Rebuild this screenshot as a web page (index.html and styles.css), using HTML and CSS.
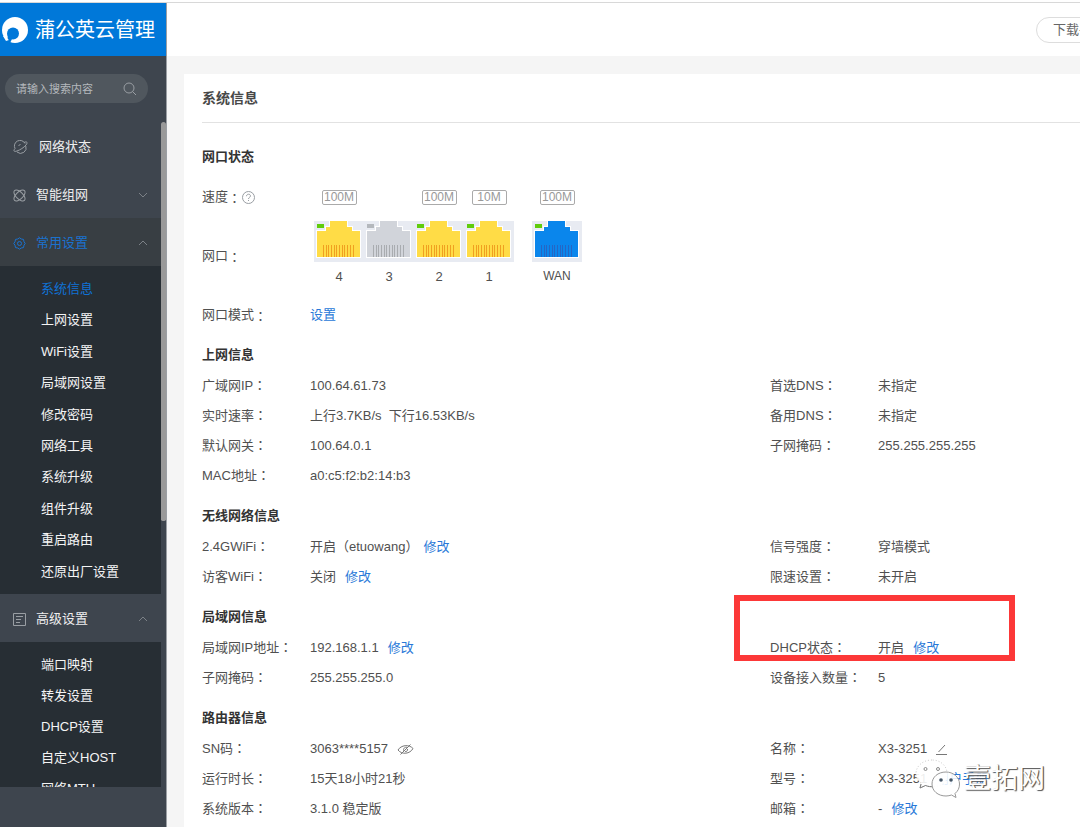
FILE: index.html
```html
<!DOCTYPE html>
<html>
<head>
<meta charset="utf-8">
<title>蒲公英云管理</title>
<link rel="stylesheet" href="styles.css">
</head>
<body>
<svg class="defs" aria-hidden="true">
  <symbol id="port" viewBox="0 0 50 41">
    <rect width="50" height="41" fill="#e8ebf2"/>
    <path d="M2 37V9H11V5H15V0H34V5H39V9H47V37Z" fill="#fff"/>
    <path d="M3 36V10H12V6H16V0H33V6H38V10H46V36Z" fill="currentColor"/>
    <rect class="led" x="3" y="3" width="7" height="4"/>
    <path class="pins" d="M9.500 24V36M12.500 24V36M14.500 24V36M17.500 24V36M20.500 24V36M22.500 24V36M25.500 24V36M28.500 24V36M30.500 24V36M33.500 24V36M36.500 24V36M39.500 24V36"/>
  </symbol>
  <symbol id="down" viewBox="0 0 10 6"><path d="M1 1L5 5L9 1"/></symbol>
  <symbol id="up" viewBox="0 0 10 6"><path d="M1 5L5 1L9 5"/></symbol>
</svg>
<div class="app">
  <aside class="sidebar">
    <div class="brand">
      <svg width="28" height="28" viewBox="0 0 28 28"><circle cx="14" cy="14" r="13" fill="#fff"/><circle cx="12" cy="17.500" r="6" fill="#0078d9"/><path d="M7 19L11 23L8.500 28L4 26L6 24Z" fill="#0078d9"/><path d="M6 19.500C6 22 7 23.500 8 24L5 25L2 20Z" fill="#fff"/></svg>
      <h1>蒲公英云管理</h1>
    </div>
    <div class="search">
      <input type="text" placeholder="请输入搜索内容" aria-label="搜索">
      <svg width="14" height="14" viewBox="0 0 14 14"><circle cx="6" cy="6" r="5"/><path d="M9.500 9.500L13 13"/></svg>
    </div>
    <nav class="menu">
      <a class="item top" href="#">
        <svg width="15" height="14" viewBox="0 0 15 14"><path d="M2 8.500A5.500 5.500 0 0 1 12 3.500M12.800 6A5.500 5.500 0 0 1 4 12"/><path d="M11 2.500C14 1 15 2.500 13 5C11 7.500 7 10 4 11C1 12 0 11 2 8.500"/><path d="M5.500 5.500L7.500 4.500"/></svg>
        <span>网络状态</span>
      </a>
      <a class="item" href="#">
        <svg width="13" height="13" viewBox="0 0 13 13"><ellipse cx="6.500" cy="6.500" rx="7" ry="3.500" transform="rotate(45 6.500 6.500)"/><ellipse cx="6.500" cy="6.500" rx="7" ry="3.500" transform="rotate(-45 6.500 6.500)"/></svg>
        <span>智能组网</span>
        <svg class="arrow" width="10" height="6"><use href="#down"/></svg>
      </a>
      <a class="item active" href="#">
        <svg width="13" height="13" viewBox="0 0 13 13"><path d="M6.500 .8L8.300 2L10.500 2.400L11 4.700L12.200 6.500L11 8.300L10.500 10.600L8.300 11L6.500 12.200L4.700 11L2.500 10.600L2 8.300L.8 6.500L2 4.700L2.500 2.400L4.700 2Z"/><circle cx="6.500" cy="6.500" r="2"/></svg>
        <span>常用设置</span>
        <svg class="arrow" width="10" height="6"><use href="#up"/></svg>
      </a>
      <div class="sub common">
        <a class="current" href="#">系统信息</a>
        <a href="#">上网设置</a>
        <a href="#">WiFi设置</a>
        <a href="#">局域网设置</a>
        <a href="#">修改密码</a>
        <a href="#">网络工具</a>
        <a href="#">系统升级</a>
        <a href="#">组件升级</a>
        <a href="#">重启路由</a>
        <a href="#">还原出厂设置</a>
      </div>
      <a class="item" href="#">
        <svg width="13" height="13" viewBox="0 0 13 13"><path d="M.5 .5H12.500V12.500H.5ZM3 3.500H10M3 6.500H8M3 9.500H7"/></svg>
        <span>高级设置</span>
        <svg class="arrow" width="10" height="6"><use href="#up"/></svg>
      </a>
      <div class="sub">
        <a href="#">端口映射</a>
        <a href="#">转发设置</a>
        <a href="#">DHCP设置</a>
        <a href="#">自定义HOST</a>
        <a href="#">网络MTU</a>
      </div>
      <div class="thumb"></div>
    </nav>
  </aside>
  <div class="page">
    <header class="bar"><button type="button">下载手机端</button></header>
    <main class="card">
      <h2>系统信息</h2>

      <section class="ports">
        <h3>网口状态</h3>
        <div class="row">
          <div class="label">速度<span class="fw">：</span><svg class="help" width="13" height="13" viewBox="0 0 13 13"><circle cx="6.500" cy="6.500" r="6"/><path d="M4.500 5.200C4.500 2.500 8.500 2.700 8.500 5C8.500 6.300 6.500 6.300 6.500 8M6.500 9V10"/></svg></div>
          <div class="cells">
            <div class="cell"><span class="speed">100M</span></div>
            <div class="cell"></div>
            <div class="cell"><span class="speed">100M</span></div>
            <div class="cell"><span class="speed">10M</span></div>
            <div class="cell wan"><span class="speed">100M</span></div>
          </div>
        </div>
        <div class="row sockets">
          <div class="label">网口<span class="fw">：</span></div>
          <div class="cells">
            <div class="cell lan"><svg width="50" height="41"><use href="#port"/></svg><span>4</span></div>
            <div class="cell off"><svg width="50" height="41"><use href="#port"/></svg><span>3</span></div>
            <div class="cell lan"><svg width="50" height="41"><use href="#port"/></svg><span>2</span></div>
            <div class="cell lan"><svg width="50" height="41"><use href="#port"/></svg><span>1</span></div>
            <div class="cell wan"><svg width="50" height="41"><use href="#port"/></svg><span class="name">WAN</span></div>
          </div>
        </div>
        <div class="row"><div class="label">网口模式<span class="fw">：</span></div><a href="#">设置</a></div>
      </section>

      <section>
        <h3>上网信息</h3>
        <div class="columns">
          <dl>
            <div class="row"><dt>广域网IP<span class="fw">：</span></dt><dd>100.64.61.73</dd></div>
            <div class="row"><dt>实时速率<span class="fw">：</span></dt><dd>上行3.7KB/s&nbsp; 下行16.53KB/s</dd></div>
            <div class="row"><dt>默认网关<span class="fw">：</span></dt><dd>100.64.0.1</dd></div>
            <div class="row"><dt>MAC地址<span class="fw">：</span></dt><dd>a0:c5:f2:b2:14:b3</dd></div>
          </dl>
          <dl>
            <div class="row"><dt>首选DNS<span class="fw">：</span></dt><dd>未指定</dd></div>
            <div class="row"><dt>备用DNS<span class="fw">：</span></dt><dd>未指定</dd></div>
            <div class="row"><dt>子网掩码<span class="fw">：</span></dt><dd>255.255.255.255</dd></div>
          </dl>
        </div>
      </section>

      <section>
        <h3>无线网络信息</h3>
        <div class="columns">
          <dl>
            <div class="row"><dt>2.4GWiFi<span class="fw">：</span></dt><dd>开启<span class="fw">（</span>etuowang<span class="fw">）</span><a href="#">修改</a></dd></div>
            <div class="row"><dt>访客WiFi<span class="fw">：</span></dt><dd>关闭<a href="#">修改</a></dd></div>
          </dl>
          <dl>
            <div class="row"><dt>信号强度<span class="fw">：</span></dt><dd>穿墙模式</dd></div>
            <div class="row"><dt>限速设置<span class="fw">：</span></dt><dd>未开启</dd></div>
          </dl>
        </div>
      </section>

      <section>
        <h3>局域网信息</h3>
        <div class="columns">
          <dl>
            <div class="row"><dt>局域网IP地址<span class="fw">：</span></dt><dd>192.168.1.1<a href="#">修改</a></dd></div>
            <div class="row"><dt>子网掩码<span class="fw">：</span></dt><dd>255.255.255.0</dd></div>
          </dl>
          <dl>
            <div class="row marked"><dt>DHCP状态<span class="fw">：</span></dt><dd>开启<a href="#">修改</a></dd></div>
            <div class="row"><dt>设备接入数量<span class="fw">：</span></dt><dd>5</dd></div>
          </dl>
        </div>
      </section>

      <section>
        <h3>路由器信息</h3>
        <div class="columns">
          <dl>
            <div class="row"><dt>SN码<span class="fw">：</span></dt><dd>3063****5157<svg class="glyph" width="17" height="11" viewBox="0 0 17 11"><path d="M1 6C4 1 12 0 16 4.500C13 10 5 11 1 6ZM3.500 10.500L13.500 .5M7 7C5.500 5 8 2.500 10 3.500M10.500 5C11 7 9 8 8 7.500"/></svg></dd></div>
            <div class="row"><dt>运行时长<span class="fw">：</span></dt><dd>15天18小时21秒</dd></div>
            <div class="row"><dt>系统版本<span class="fw">：</span></dt><dd>3.1.0 稳定版</dd></div>
          </dl>
          <dl>
            <div class="row"><dt>名称<span class="fw">：</span></dt><dd>X3-3251<svg class="glyph" width="11" height="11" viewBox="0 0 11 11"><path d="M2.500 8L9 1M0 10.500H11"/></svg></dd></div>
            <div class="row"><dt>型号<span class="fw">：</span></dt><dd>X3-3251<a href="#">用户手册</a></dd></div>
            <div class="row"><dt>邮箱<span class="fw">：</span></dt><dd>-<a href="#">修改</a></dd></div>
          </dl>
        </div>
      </section>
    </main>
    <div class="watermark">
      <svg width="46" height="40" viewBox="0 0 46 40">
        <path d="M17 1C8 1 1 7 1 14.500C1 19 3 22 6.500 24.500L5 29L10.500 26.500C13 27.500 16 28 19 27.500C30 27 33 20 32 13C31 6 25 1 17 1Z" fill="#fff" fill-opacity=".9" stroke="#ccc" stroke-dasharray="1 2"/>
        <path d="M6 25L5 29L10.500 26.500C13 27.500 16 28 18 27.500" fill="none" stroke="#777"/>
        <path d="M31 13C23 13 17 18 17 25C17 32 23 37 31 37C33 37 35 36.500 36.500 36L41 38.500L40 34.500C43 32 44.500 29 44.500 25C44.500 18 38 13 31 13Z" fill="#fff" fill-opacity=".88" stroke="#999"/>
        <g fill="#fff" stroke="#888"><circle cx="10.500" cy="10" r="1.500"/><circle cx="23" cy="10" r="1.500"/></g>
        <g fill="#456"><circle cx="26" cy="21" r="1.800"/><circle cx="36" cy="21" r="1.800"/></g>
      </svg>
      <span>壹拓网</span>
    </div>
  </div>
</div>
</body>
</html>
```
FILE: styles.css
```css
*, *::after { box-sizing: border-box; }

body {
  margin: 0;
  color: #505050;
  background: #fff;
  font: 13px/30px "Liberation Sans", "Noto Sans CJK SC", sans-serif;
}

h1, h2, h3, dl, dd { margin: 0; }
a { color: #2878d8; text-decoration: none; }
.defs { position: absolute; width: 0; height: 0; }
.fw { font-family: "Noto Sans CJK TC", sans-serif; line-height: 1; }

.app {
  display: flex;
  height: calc(100vh - 2px);
  overflow: hidden;
  border-top: 1px solid #d8d8d8;
  margin-top: 2px;
}

/* Sidebar */
.sidebar {
  display: flex;
  flex: none;
  flex-direction: column;
  width: 167px;
  padding-bottom: 40px;
  background: #3e454e;
  border-right: 1px solid #9b9fa4;
}
.brand {
  display: flex;
  flex: none;
  align-items: center;
  gap: 6px;
  height: 53px;
  padding-left: 1px;
  color: #fff;
  background: #0078d9;
}
.brand h1 { font-size: 20px; font-weight: 400; white-space: nowrap; }
.search {
  display: flex;
  flex: none;
  align-items: center;
  height: 29px;
  margin: 18px 18px 19px 5px;
  padding: 0 11px;
  border-radius: 15px;
  background: #50575e;
}
.search input {
  flex: 1;
  min-width: 0;
  padding: 0;
  border: 0;
  outline: 0;
  color: #fff;
  background: none;
  font: inherit;
  font-size: 11px;
}
.search input::placeholder { color: #b4b8bc; }
.sidebar svg { flex: none; }
.search svg, .item svg, .help, .glyph { fill: none; stroke: #999ea3; }

.menu { position: relative; flex: 1; min-height: 0; overflow: hidden; }
.thumb {
  position: absolute;
  top: 0;
  right: 0;
  width: 5px;
  height: 60%;
  border-radius: 3px 3px 2px 2px;
  background: #999;
}
.item {
  display: flex;
  align-items: center;
  gap: 10px;
  height: 48px;
  margin-right: 5px;
  padding: 2px 13px 0;
  color: #eee;
}
.item.top { gap: 11px; }
.item .arrow { margin-left: auto; stroke: #7c8187; }
.item.active { color: #1a72cf; background: #383e43; }
.item.active svg:first-child { stroke: #1a72cf; }
.sub {
  display: grid;
  grid-auto-rows: minmax(31px, 1fr);
  margin-right: 5px;
  padding: 8px 0 6px 41px;
  background: #272e34;
}
.sub.common { min-height: 328px; }
.sub a { color: #f4f4f4; }
.sub .current { color: #0f72d6; }

/* Content */
.page {
  position: relative;
  display: flex;
  flex: 1;
  flex-direction: column;
  min-width: 0;
  background: #f5f5f5;
}
.bar {
  display: flex;
  flex: none;
  align-items: center;
  height: 53px;
  overflow: hidden;
  background: #fff;
}
.bar button {
  flex: none;
  height: 26px;
  margin: 0 -55px 0 auto;
  padding: 0 16px;
  border: 1px solid #ddd;
  border-radius: 13px;
  color: #666;
  background: #fff;
  font: inherit;
  line-height: 24px;
}
.card {
  flex: 1;
  margin: 18px 0 0 17px;
  padding-left: 18px;
  background: #fff;
}
h2 {
  margin-bottom: 18px;
  padding-top: 1px;
  border-bottom: 1px solid #e2e2e2;
  color: #484848;
  font-size: 14px;
  font-weight: 700;
  line-height: 47px;
}
h3 { color: #333; font-size: 13px; line-height: 32px; }
section { margin-bottom: 9px; }
.columns { display: grid; grid-template-columns: minmax(0, 11fr) minmax(0, 6fr); }
.row { display: flex; white-space: nowrap; }
.label, dt { flex: none; width: 108px; }
dd a { margin-left: 9px; }
.fw + a { margin-left: 5px; }

.ports { display: grid; row-gap: 9px; }
.ports .label, .cells { display: flex; align-items: center; }
.help { margin-left: 1px; }
.cells { padding-left: 4px; }
.cell {
  display: flex;
  flex-direction: column;
  align-items: center;
  width: 50px;
  line-height: 29px;
}
.cell.wan { margin-left: 18px; color: #0a86ec; --pin: #2566c4; }
.cell.lan { color: #ffdc46; --pin: #f0a020; }
.cell.off { color: #d1d4da; --pin: #a9acb0; --led: #b4b8bd; }
.sockets span { color: #505050; }
.sockets .name { font-size: 12px; }
.led { fill: var(--led, #60cc0c); }
.pins { stroke: var(--pin); }
.cell .speed {
  width: 35px;
  border: 1px solid #aaa;
  border-radius: 2px;
  color: #999;
  font-size: 12px;
  line-height: 13px;
  text-align: center;
}
.glyph { margin-left: 9px; vertical-align: -2px; stroke: #777; }

/* Highlight frame around the DHCP setting */
.marked { position: relative; }
.marked::after {
  content: "";
  position: absolute;
  top: -38px;
  left: -36px;
  width: 281px;
  height: 66px;
  border: 6px solid #fc3838;
  pointer-events: none;
}

.watermark {
  position: absolute;
  right: 35px;
  bottom: 28px;
  display: flex;
  align-items: center;
  gap: 3px;
  color: #fff;
  font-size: 27px;
  text-shadow: 1px 1px 1px #555, 1px 0 0 #888;
}
```
